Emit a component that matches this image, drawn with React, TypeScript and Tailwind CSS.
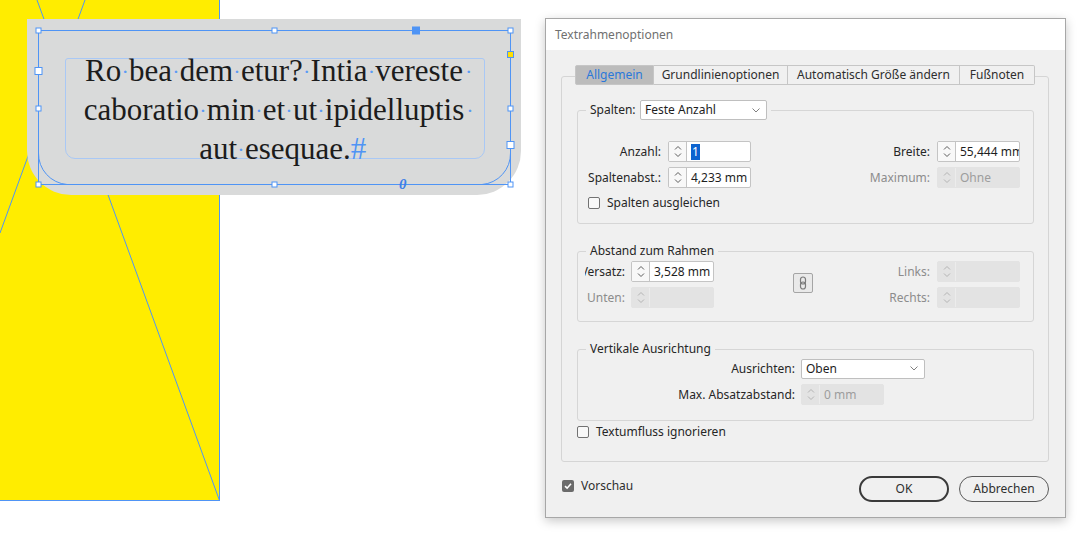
import React from 'react';

// Farben aus InDesign
const BLUE = '#4f94f5';

function Chevrons({ disabled }: { disabled?: boolean }) {
  const c = disabled ? '#b4b4b4' : '#5c5c5c';
  return (
    <svg width="8" height="15" viewBox="0 0 8 15" fill="none" stroke={c} strokeWidth="1">
      <path d="M1 5.5 L4 2.5 L7 5.5" />
      <path d="M1 9.5 L4 12.5 L7 9.5" />
    </svg>
  );
}

function Spinner({ value, disabled, selected }: { value?: string; disabled?: boolean; selected?: boolean }) {
  return (
    <div
      className={`flex h-[21px] w-[83px] shrink-0 overflow-hidden rounded-[2px] border ${
        disabled ? 'border-[#e3e3e3] bg-[#e3e3e3]' : 'border-[#c4c4c4] bg-white'
      }`}
    >
      <div
        className={`flex w-[18px] shrink-0 items-center justify-center border-r ${
          disabled ? 'border-[#ececec]' : 'border-[#c4c4c4] bg-[#f8f8f8]'
        }`}
      >
        <Chevrons disabled={disabled} />
      </div>
      <div className={`flex items-center whitespace-nowrap pl-[4px] ${disabled ? 'text-[#9d9d9d]' : 'text-[#1e1e1e]'}`}>
        {selected ? <span className="bg-[#0c63cf] px-[1px] text-white">{value}</span> : value}
      </div>
    </div>
  );
}

function Select({ value, width }: { value: string; width: string }) {
  return (
    <div className={`flex h-[20px] items-center justify-between rounded-[2px] border border-[#bfbfbf] bg-white pl-[4px] pr-[6px] ${width}`}>
      <span className="text-[#1e1e1e]">{value}</span>
      <svg width="8" height="5" viewBox="0 0 8 5" fill="none" stroke="#808080" strokeWidth="1">
        <path d="M0.5 0.5 L4 4 L7.5 0.5" />
      </svg>
    </div>
  );
}

function Checkbox({ checked }: { checked?: boolean }) {
  if (checked) {
    return (
      <span className="flex h-[12px] w-[12px] shrink-0 items-center justify-center rounded-[2px] bg-[#6b6b6b]">
        <svg width="8" height="8" viewBox="0 0 8 8" fill="none">
          <path d="M1 4.2 L3.1 6.2 L7 1.8" stroke="white" strokeWidth="1.6" />
        </svg>
      </span>
    );
  }
  return <span className="h-[12px] w-[12px] shrink-0 rounded-[2px] border border-[#727272] bg-[#f8f8f8]" />;
}

// Leerzeichen werden als blaue Punkte angezeigt
const Dot = () => (
  <span className="relative -top-[2px] inline-block w-[7.75px] text-center text-[22px] leading-none text-[#5b9bf5]">·</span>
);
const EndDot = () => (
  <span className="relative -top-[2px] inline-block w-0 pl-[2px] text-[22px] leading-none text-[#5b9bf5]">·</span>
);

function Canvas() {
  return (
    <div className="relative h-full w-[545px] shrink-0">
      <div className="absolute left-0 top-0 h-[501px] w-[220px] border-b border-r border-[#4f94f5] bg-[#ffed00]" />
      <svg className="absolute left-0 top-0" width="220" height="501">
        <line x1="37" y1="0" x2="219.5" y2="500.5" stroke={BLUE} strokeWidth="1" />
        <line x1="85" y1="0" x2="0" y2="233" stroke={BLUE} strokeWidth="1" />
      </svg>

      {/* Textrahmen */}
      <div className="absolute left-[27px] top-[19px] h-[176px] w-[494px] rounded-b-[44px] bg-[#d9dada]" />
      <div className="absolute left-[65px] top-[58px] h-[101px] w-[420px] rounded-b-[10px] rounded-t-[3px] border border-[#a9c8f5]" />
      <div className="absolute left-[65px] top-[51px] w-[420px] text-center font-['Liberation_Serif',serif] text-[31px] leading-[39px] text-[#1c1c1c]">
        <div>
          Ro<Dot />bea<Dot />dem<Dot />etur?<Dot />Intia<Dot />vereste<EndDot />
        </div>
        <div>
          caboratio<Dot />min<Dot />et<Dot />ut<Dot />ipidelluptis<EndDot />
        </div>
        <div>
          aut<Dot />esequae.<span className="inline-block w-0 text-[#4f94f5]">#</span>
        </div>
      </div>

      {/* Auswahl */}
      <svg className="absolute left-0 top-0" width="545" height="538" fill="none">
        <rect x="38.5" y="30.5" width="472" height="154" stroke={BLUE} />
        <path d="M38.5 153 A 31 31 0 0 0 67 184.5" stroke={BLUE} />
        <path d="M510.5 153 A 31 31 0 0 1 482 184.5" stroke={BLUE} />
        {[
          [38.5, 30.5],
          [274.5, 30.5],
          [510.5, 30.5],
          [38.5, 108.5],
          [510.5, 108.5],
          [38.5, 184.5],
          [274.5, 184.5],
          [510.5, 184.5],
        ].map(([x, y], i) => (
          <rect key={i} x={x - 2.5} y={y - 2.5} width="5" height="5" fill="white" stroke={BLUE} />
        ))}
        <rect x="35" y="67.5" width="7" height="7" fill="white" stroke={BLUE} />
        <rect x="507" y="141.5" width="7" height="7" fill="white" stroke={BLUE} />
        <rect x="412.5" y="27" width="7" height="7" fill={BLUE} stroke={BLUE} />
        <rect x="507.5" y="51.5" width="6" height="6" fill="#ffde00" stroke={BLUE} />
      </svg>
      <span className="absolute left-[399px] top-[174px] font-['Liberation_Serif',serif] text-[15px] font-bold italic leading-[20px] text-[#3d7fe6]">
        0
      </span>
    </div>
  );
}

function Dialog() {
  const tabs = [
    { label: 'Allgemein', w: 'w-[79px]' },
    { label: 'Grundlinienoptionen', w: 'w-[134px]' },
    { label: 'Automatisch Größe ändern', w: 'w-[172px]' },
    { label: 'Fußnoten', w: 'w-[75px]' },
  ];

  return (
    <div className="mt-[18px] flex h-[500px] w-[521px] shrink-0 flex-col border border-[#a7a7a7] bg-[#f0f0f0] shadow-[0_3px_10px_rgba(0,0,0,0.22)]">
      <div className="flex h-[31px] items-center bg-white pl-[9px] text-[#707070]">Textrahmenoptionen</div>

      <div className="flex-1 pl-[15px] pr-[16px] pt-[15px]">
        {/* Reiter */}
        <div className="relative z-10 ml-[14px] flex h-[20px]">
          {tabs.map((t, i) => (
            <div
              key={t.label}
              className={`flex h-full items-center justify-center border border-[#c6c6c6] ${t.w} ${
                i === 0 ? 'rounded-l-[2px] bg-[#bcbcbc] text-[#2a78da]' : 'border-l-0 bg-[#f0f0f0] text-[#2e2e2e]'
              } ${i === tabs.length - 1 ? 'rounded-r-[2px]' : ''}`}
            >
              {t.label}
            </div>
          ))}
        </div>

        <div className="-mt-[9px] h-[386px] rounded-[3px] border border-[#d5d5d5] pl-[15px] pr-[14px] pt-[23px]">
          {/* Spalten */}
          <fieldset className="m-0 min-w-0 rounded-[3px] border border-[#d6d6d6] p-0">
            <legend className="ml-[8px] flex items-center px-[4px]">
              <span className="w-[50px] text-[#262626]">Spalten:</span>
              <Select value="Feste Anzahl" width="w-[127px]" />
            </legend>
            <div className="pb-[12px] pl-[10px] pr-[13px] pt-[21px]">
              <div className="flex h-[21px] items-center justify-between">
                <div className="flex items-center">
                  <span className="mr-[7px] w-[73px] text-right">Anzahl:</span>
                  <Spinner value="1" selected />
                </div>
                <div className="flex items-center">
                  <span className="mr-[7px] text-right">Breite:</span>
                  <Spinner value="55,444 mm" />
                </div>
              </div>
              <div className="mt-[5px] flex h-[21px] items-center justify-between">
                <div className="flex items-center">
                  <span className="mr-[7px] w-[73px] text-right">Spaltenabst.:</span>
                  <Spinner value="4,233 mm" />
                </div>
                <div className="flex items-center">
                  <span className="mr-[7px] text-right text-[#8c8c8c]">Maximum:</span>
                  <Spinner value="Ohne" disabled />
                </div>
              </div>
              <div className="mt-[7px] flex h-[16px] items-center gap-[7px]">
                <Checkbox />
                <span>Spalten ausgleichen</span>
              </div>
            </div>
          </fieldset>

          {/* Abstand zum Rahmen */}
          <fieldset className="m-0 mt-[19px] min-w-0 rounded-[3px] border border-[#d6d6d6] p-0">
            <legend className="ml-[8px] px-[4px] leading-[16px] text-[#262626]">Abstand zum Rahmen</legend>
            <div className="flex pb-[13px] pl-[7px] pr-[13px] pt-[2px]">
              <div className="flex flex-col gap-[5px]">
                <div className="flex h-[21px] items-center">
                  <div className="mr-[6px] flex w-[40px] justify-end overflow-hidden whitespace-nowrap">
                    <span className="shrink-0">Versatz:</span>
                  </div>
                  <Spinner value="3,528 mm" />
                </div>
                <div className="flex h-[21px] items-center">
                  <div className="mr-[6px] flex w-[40px] justify-end overflow-hidden whitespace-nowrap text-[#8c8c8c]">
                    <span className="shrink-0">Unten:</span>
                  </div>
                  <Spinner disabled />
                </div>
              </div>
              <div className="ml-[79px] mt-[12px] flex h-[20px] w-[20px] items-center justify-center rounded-[2px] border border-[#a5a5a5] bg-[#e9e9e9]">
                <svg width="8" height="14" viewBox="0 0 8 14" fill="none" stroke="#7a7a7a" strokeWidth="1.2">
                  <rect x="1.5" y="1" width="5" height="7" rx="2.5" />
                  <rect x="1.5" y="6" width="5" height="7" rx="2.5" />
                </svg>
              </div>
              <div className="ml-auto flex flex-col gap-[5px] text-[#8c8c8c]">
                <div className="flex h-[21px] items-center justify-end">
                  <span className="mr-[7px]">Links:</span>
                  <Spinner disabled />
                </div>
                <div className="flex h-[21px] items-center justify-end">
                  <span className="mr-[7px]">Rechts:</span>
                  <Spinner disabled />
                </div>
              </div>
            </div>
          </fieldset>

          {/* Vertikale Ausrichtung */}
          <fieldset className="m-0 mt-[19px] min-w-0 rounded-[3px] border border-[#d6d6d6] p-0">
            <legend className="ml-[8px] px-[4px] leading-[16px] text-[#262626]">Vertikale Ausrichtung</legend>
            <div className="pb-[15px] pt-[1px]">
              <div className="flex h-[21px] items-center">
                <span className="mr-[6px] w-[217px] text-right">Ausrichten:</span>
                <Select value="Oben" width="w-[124px]" />
              </div>
              <div className="mt-[5px] flex h-[21px] items-center">
                <span className="mr-[6px] w-[217px] text-right">Max. Absatzabstand:</span>
                <Spinner value="0 mm" disabled />
              </div>
            </div>
          </fieldset>

          <div className="mt-[3px] flex h-[16px] items-center gap-[7px]">
            <Checkbox />
            <span>Textumfluss ignorieren</span>
          </div>
        </div>

        {/* Fußzeile */}
        <div className="mt-[14px] flex h-[26px] items-start justify-between">
          <div className="ml-[1px] flex h-[20px] items-center gap-[7px]">
            <Checkbox checked />
            <span className="text-[#2e2e2e]">Vorschau</span>
          </div>
          <div className="flex gap-[10px]">
            <button className="flex h-[26px] w-[90px] items-center justify-center rounded-full border-2 border-[#3a3a3a] text-[#2e2e2e]">
              OK
            </button>
            <button className="flex h-[26px] w-[90px] items-center justify-center rounded-full border border-[#5a5a5a] text-[#2e2e2e]">
              Abbrechen
            </button>
          </div>
        </div>
      </div>
    </div>
  );
}

export default function App() {
  return (
    <div className="flex h-[538px] w-[1085px] overflow-hidden bg-white font-['Noto_Sans',sans-serif] text-[12px] leading-[16px] text-[#262626]">
      <Canvas />
      <Dialog />
    </div>
  );
}
